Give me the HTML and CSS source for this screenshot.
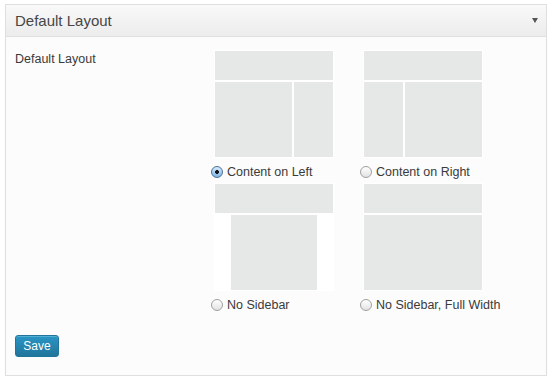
FILE: index.html
```html
<!DOCTYPE html>
<html lang="en">
<head>
    <meta charset="UTF-8">
    <meta name="viewport" content="width=device-width, initial-scale=1.0">
    <title>Default Layout</title>
    <link rel="stylesheet" href="styles.css">
</head>
<body>

    <div class="postbox">
        <div class="postbox-head">
            <h3>Default Layout</h3>
            <span class="toggle-arrow" aria-hidden="true"></span>
        </div>

        <div class="postbox-body">
            <div class="field-row">
                <div class="field-label">Default Layout</div>

                <div class="layout-grid">
                    <!-- Content on left: main block then sidebar -->
                    <label class="layout-option">
                        <span class="thumb">
                            <span class="thumb-top"></span>
                            <span class="thumb-bottom">
                                <span class="block wide"></span>
                                <span class="block narrow"></span>
                            </span>
                        </span>
                        <span class="option-caption">
                            <input type="radio" name="layout" value="content-left" checked>
                            Content on Left
                        </span>
                    </label>

                    <label class="layout-option">
                        <span class="thumb">
                            <span class="thumb-top"></span>
                            <span class="thumb-bottom">
                                <span class="block narrow"></span>
                                <span class="block wide"></span>
                            </span>
                        </span>
                        <span class="option-caption">
                            <input type="radio" name="layout" value="content-right">
                            Content on Right
                        </span>
                    </label>

                    <label class="layout-option">
                        <span class="thumb">
                            <span class="thumb-top"></span>
                            <span class="thumb-bottom centered">
                                <span class="block middle"></span>
                            </span>
                        </span>
                        <span class="option-caption">
                            <input type="radio" name="layout" value="no-sidebar">
                            No Sidebar
                        </span>
                    </label>

                    <label class="layout-option">
                        <span class="thumb">
                            <span class="thumb-top"></span>
                            <span class="thumb-bottom">
                                <span class="block full"></span>
                            </span>
                        </span>
                        <span class="option-caption">
                            <input type="radio" name="layout" value="full-width">
                            No Sidebar, Full Width
                        </span>
                    </label>
                </div>
            </div>

            <button class="button-primary" type="button">Save</button>
        </div>
    </div>

</body>
</html>
```

FILE: styles.css
```css
* {
    box-sizing: border-box;
}

body {
    margin: 0;
    background-color: #fff;
    font-family: "Liberation Sans", Arial, sans-serif;
    color: #333;
}

/* Panel box */
.postbox {
    width: 542px;
    margin: 4px 0 0 5px;
    border: 1px solid #dfdfdf;
    background-color: #fcfcfc;
    box-shadow: 0 1px 1px rgba(0, 0, 0, 0.04);
}

.postbox-head {
    display: flex;
    align-items: center;
    justify-content: space-between;
    height: 32px;
    padding: 0 8px 0 9px;
    border-bottom: 1px solid #dfdfdf;
    background: linear-gradient(to bottom, #f9f9f9, #ececec);
}
.postbox-head h3 {
    margin: 0;
    font-size: 15px;
    font-weight: normal;
    color: #464646;
}
.toggle-arrow {
    width: 0;
    height: 0;
    border-left: 3px solid transparent;
    border-right: 3px solid transparent;
    border-top: 5px solid #555;
}

.postbox-body {
    padding: 13px 8px 18px 9px;
}

.field-row {
    display: flex;
}
.field-label {
    width: 196px;
    flex-shrink: 0;
    padding-top: 1px;
    font-size: 12.5px;
    line-height: 16px;
    color: #3a3a3a;
}

/* Layout choices */
.layout-grid {
    display: grid;
    grid-template-columns: 123px 123px;
    column-gap: 26px;
}
.layout-option {
    display: flex;
    flex-direction: column;
    height: 133px;
    cursor: pointer;
}
.thumb {
    display: flex;
    flex-direction: column;
    gap: 2px;
    width: 120px;
    height: 108px;
    margin-left: 3px;
    padding: 1px;
    background-color: #fff;
}
.thumb-top {
    height: 29px;
    background-color: #e6e7e7;
}
.thumb-bottom {
    display: flex;
    gap: 2px;
    flex: 1;
}
.thumb-bottom.centered {
    justify-content: center;
}
.block {
    background-color: #e6e7e7;
}
.block.wide { width: 77px; }
.block.narrow { width: 39px; }
.block.middle { width: 86px; }
.block.full { flex: 1; }

.option-caption {
    display: flex;
    align-items: center;
    gap: 4px;
    margin-top: 6px;
    font-size: 12.5px;
    line-height: 16px;
    color: #3a3a3a;
    white-space: nowrap;
}
.option-caption input[type="radio"] {
    -webkit-appearance: none;
    appearance: none;
    flex-shrink: 0;
    width: 12px;
    height: 12px;
    margin: 0;
    border: 1px solid #a0a0a0;
    border-radius: 50%;
    background: linear-gradient(to bottom, #ffffff, #e2e2e2);
}
.option-caption input[type="radio"]:checked {
    border-color: #4f6f93;
    background:
        radial-gradient(circle, #151515 0 1.6px, transparent 2.2px),
        linear-gradient(to bottom, #d6eafc, #7ab6ea);
}

/* Save button */
.button-primary {
    display: block;
    width: 44px;
    height: 22px;
    margin-top: 19px;
    padding: 0;
    border: 1px solid #21759b;
    border-radius: 3px;
    background: linear-gradient(to bottom, #2a95c5, #21759b);
    color: #fff;
    font-family: "Liberation Sans", Arial, sans-serif;
    font-size: 12px;
    cursor: pointer;
    box-shadow: inset 0 1px 0 rgba(120, 200, 230, 0.5);
}
.button-primary:hover {
    background: linear-gradient(to bottom, #278ab7, #1e6a8d);
}
```
